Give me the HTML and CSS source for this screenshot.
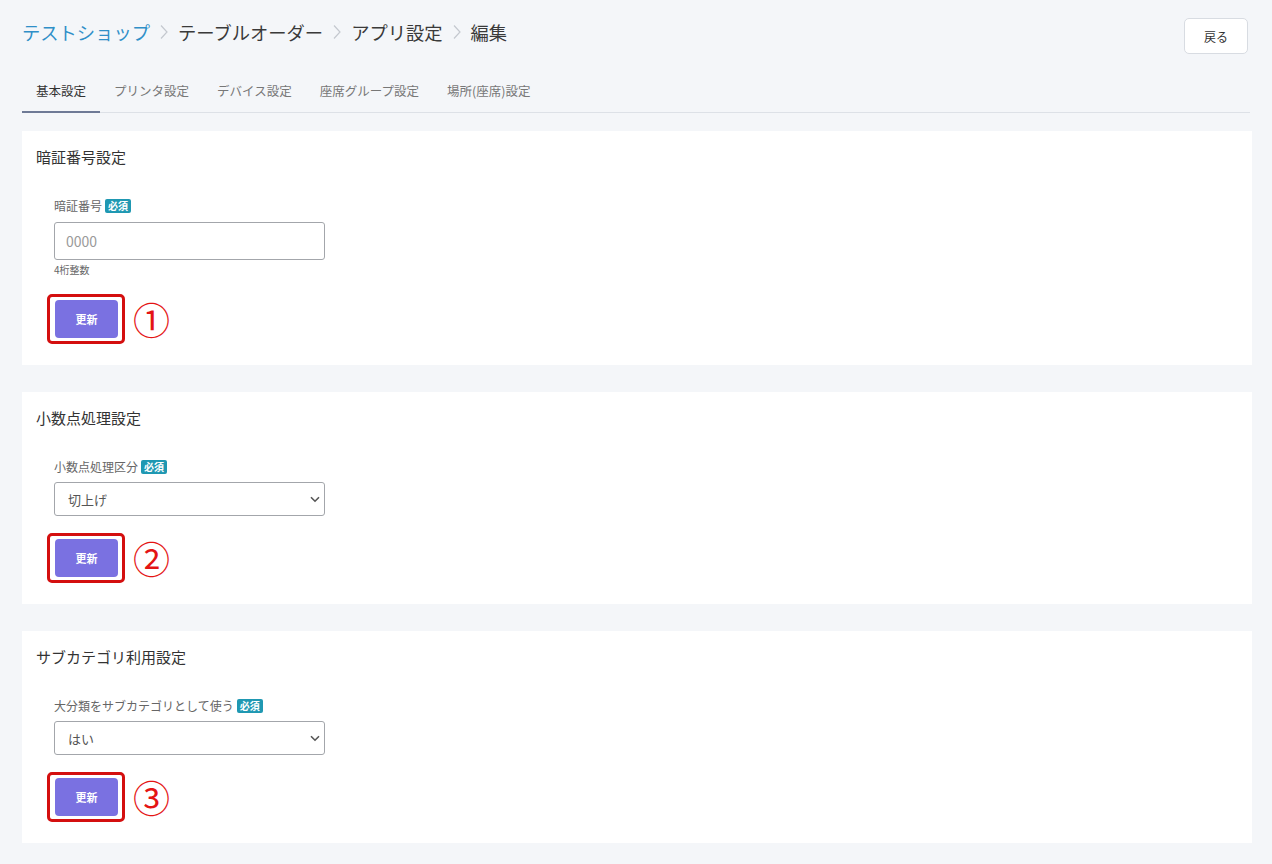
FILE: index.html
```html
<!DOCTYPE html>
<html lang="ja">
<head>
<meta charset="utf-8">
<title>編集</title>
<link rel="stylesheet" href="styles.css">
</head>
<body>
<div class="page">
  <header class="header">
    <nav class="breadcrumb">
      <a class="crumb link">テストショップ</a>
      <svg class="sep" width="10" height="16" viewBox="0 0 10 16"><path d="M2 1.5 L8 8 L2 14.5" fill="none" stroke="#c4c8cf" stroke-width="1.2"/></svg>
      <span class="crumb">テーブルオーダー</span>
      <svg class="sep" width="10" height="16" viewBox="0 0 10 16"><path d="M2 1.5 L8 8 L2 14.5" fill="none" stroke="#c4c8cf" stroke-width="1.2"/></svg>
      <span class="crumb">アプリ設定</span>
      <svg class="sep" width="10" height="16" viewBox="0 0 10 16"><path d="M2 1.5 L8 8 L2 14.5" fill="none" stroke="#c4c8cf" stroke-width="1.2"/></svg>
      <span class="crumb">編集</span>
    </nav>
    <button class="back">戻る</button>
  </header>

  <div class="tabs">
    <div class="tab active">基本設定</div>
    <div class="tab">プリンタ設定</div>
    <div class="tab">デバイス設定</div>
    <div class="tab">座席グループ設定</div>
    <div class="tab">場所(座席)設定</div>
  </div>

  <section class="card">
    <h2 class="card-title">暗証番号設定</h2>
    <div class="field">
      <label class="label">暗証番号<span class="badge">必須</span></label>
      <input class="input" type="text" placeholder="0000">
      <div class="help">4桁整数</div>
    </div>
    <div class="actions">
      <span class="mark"><button class="btn">更新</button></span>
      <span class="num">①</span>
    </div>
  </section>

  <section class="card">
    <h2 class="card-title">小数点処理設定</h2>
    <div class="field">
      <label class="label">小数点処理区分<span class="badge">必須</span></label>
      <div class="select-wrap">
        <select class="select"><option>切上げ</option></select>
        <svg class="chev" width="10" height="7" viewBox="0 0 10 7"><path d="M1 1.2 L5 5.2 L9 1.2" fill="none" stroke="#555" stroke-width="1.6"/></svg>
      </div>
    </div>
    <div class="actions">
      <span class="mark"><button class="btn">更新</button></span>
      <span class="num">②</span>
    </div>
  </section>

  <section class="card">
    <h2 class="card-title">サブカテゴリ利用設定</h2>
    <div class="field">
      <label class="label">大分類をサブカテゴリとして使う<span class="badge">必須</span></label>
      <div class="select-wrap">
        <select class="select"><option>はい</option></select>
        <svg class="chev" width="10" height="7" viewBox="0 0 10 7"><path d="M1 1.2 L5 5.2 L9 1.2" fill="none" stroke="#555" stroke-width="1.6"/></svg>
      </div>
    </div>
    <div class="actions">
      <span class="mark"><button class="btn">更新</button></span>
      <span class="num">③</span>
    </div>
  </section>
</div>
</body>
</html>
```

FILE: styles.css
```css
* { box-sizing: border-box; }
html, body { margin: 0; padding: 0; }
body {
  background: #f4f6f9;
  font-family: "Noto Sans CJK JP", "Noto Sans", sans-serif;
  color: #333;
}
.page {
  padding: 18px 20px 20px 22px;
}
.header {
  display: flex;
  justify-content: space-between;
  align-items: flex-start;
  padding-right: 4px;
}
.breadcrumb {
  display: flex;
  align-items: center;
  height: 28px;
  font-size: 18.3px;
  line-height: 28px;
  gap: 9px;
}
.crumb { color: #3a3a3a; }
.crumb.link { color: #2f8fc8; }
.sep { display: block; }
.back {
  width: 64px;
  height: 36px;
  background: #fff;
  border: 1px solid #d8dce2;
  border-radius: 5px;
  font-family: inherit;
  font-size: 12px;
  color: #333;
  padding: 0;
}
.tabs {
  display: flex;
  margin-top: 16px;
  border-bottom: 1px solid #dde1e7;
  margin-right: 2px;
}
.tab {
  padding: 12px 14px 12px;
  font-size: 12.5px;
  line-height: 18px;
  color: #777;
}
.tab.active {
  color: #333;
  border-bottom: 2px solid #6e7a96;
  margin-bottom: -1px;
  padding-bottom: 11px;
}
.card {
  background: #fff;
  margin-top: 18px;
  padding: 16px 14px 21px;
}
.card + .card { margin-top: 27px; }
.card-title {
  margin: 0;
  font-size: 15px;
  line-height: 20px;
  font-weight: 400;
  color: #333;
}
.field {
  margin-top: 30px;
  padding-left: 18px;
  width: 289px;
}
.label {
  display: flex;
  align-items: center;
  height: 18px;
  font-size: 12px;
  line-height: 18px;
  color: #666;
}
.badge {
  display: inline-block;
  margin-left: 3px;
  background: #1f98b2;
  color: #fff;
  font-size: 10px;
  font-weight: 700;
  line-height: 14px;
  padding: 0 3px;
  border-radius: 2px;
}
.input {
  display: block;
  margin-top: 7px;
  width: 271px;
  height: 38px;
  border: 1px solid #a3a6ab;
  border-radius: 3px;
  padding: 0 11px;
  font-family: inherit;
  font-size: 14px;
  color: #333;
  background: #fff;
}
.input::placeholder { color: #9a9a9a; }
.help {
  margin-top: 3px;
  margin-bottom: 3px;
  font-size: 10px;
  line-height: 14px;
  color: #666;
}
.select-wrap {
  position: relative;
  margin-top: 6px;
  width: 271px;
}
.select {
  display: block;
  width: 271px;
  height: 34px;
  border: 1px solid #a3a6ab;
  border-radius: 3px;
  padding: 0 13px;
  font-family: inherit;
  font-size: 13px;
  color: #555;
  background: #fff;
  -webkit-appearance: none;
  appearance: none;
}
.chev {
  position: absolute;
  right: 5px;
  top: 14px;
}
.actions {
  display: flex;
  align-items: center;
  margin-top: 17px;
  padding-left: 11px;
}
.mark {
  display: inline-flex;
  border: 3px solid #d40f0f;
  border-radius: 5px;
  padding: 3px 4px 3px 5px;
}
.btn {
  width: 63px;
  height: 38px;
  background: #7a71e1;
  border: none;
  border-radius: 4px;
  color: #fff;
  font-family: inherit;
  font-size: 11px;
  font-weight: 700;
  padding: 0;
}
.num {
  margin-left: 8px;
  font-size: 37px;
  line-height: 40px;
  color: #e41414;
}
```
